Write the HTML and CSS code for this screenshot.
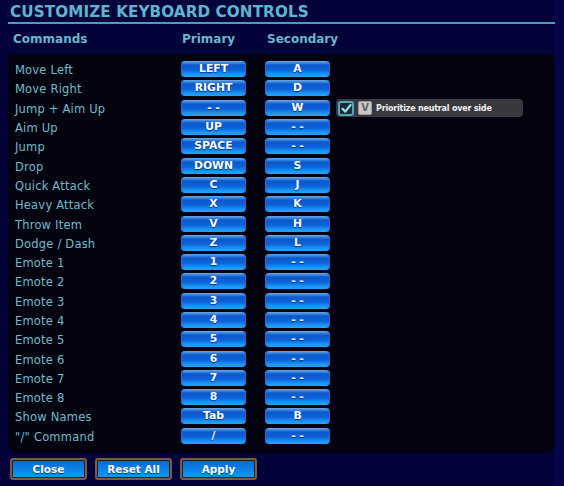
FILE: index.html
```html
<!DOCTYPE html>
<html>
<head>
<meta charset="utf-8">
<link rel="stylesheet" href="styles.css">
</head>
<body>
<div class="screen">
  <h1 class="title">CUSTOMIZE KEYBOARD CONTROLS</h1>
  <div class="heads">
    <span class="h-cmd">Commands</span>
    <span class="h-pri">Primary</span>
    <span class="h-sec">Secondary</span>
  </div>
  <div class="panel">
    <div class="row"><span class="label">Move Left</span><span class="key">LEFT</span><span class="key">A</span></div>
    <div class="row"><span class="label">Move Right</span><span class="key">RIGHT</span><span class="key">D</span></div>
    <div class="row"><span class="label">Jump + Aim Up</span><span class="key">- -</span><span class="key">W</span>
      <span class="opt"><span class="check"><svg width="11" height="11" viewBox="0 0 11 11"><path d="M1.5 5.8 L4.3 8.6 L9.6 2" fill="none" stroke="#8fe0f0" stroke-width="2.2" stroke-linecap="round" stroke-linejoin="round"/></svg></span><span class="vkey">V</span><span class="opt-text">Prioritize neutral over side</span></span>
    </div>
    <div class="row"><span class="label">Aim Up</span><span class="key">UP</span><span class="key">- -</span></div>
    <div class="row"><span class="label">Jump</span><span class="key">SPACE</span><span class="key">- -</span></div>
    <div class="row"><span class="label">Drop</span><span class="key">DOWN</span><span class="key">S</span></div>
    <div class="row"><span class="label">Quick Attack</span><span class="key">C</span><span class="key">J</span></div>
    <div class="row"><span class="label">Heavy Attack</span><span class="key">X</span><span class="key">K</span></div>
    <div class="row"><span class="label">Throw Item</span><span class="key">V</span><span class="key">H</span></div>
    <div class="row"><span class="label">Dodge / Dash</span><span class="key">Z</span><span class="key">L</span></div>
    <div class="row"><span class="label">Emote 1</span><span class="key">1</span><span class="key">- -</span></div>
    <div class="row"><span class="label">Emote 2</span><span class="key">2</span><span class="key">- -</span></div>
    <div class="row"><span class="label">Emote 3</span><span class="key">3</span><span class="key">- -</span></div>
    <div class="row"><span class="label">Emote 4</span><span class="key">4</span><span class="key">- -</span></div>
    <div class="row"><span class="label">Emote 5</span><span class="key">5</span><span class="key">- -</span></div>
    <div class="row"><span class="label">Emote 6</span><span class="key">6</span><span class="key">- -</span></div>
    <div class="row"><span class="label">Emote 7</span><span class="key">7</span><span class="key">- -</span></div>
    <div class="row"><span class="label">Emote 8</span><span class="key">8</span><span class="key">- -</span></div>
    <div class="row"><span class="label">Show Names</span><span class="key">Tab</span><span class="key">B</span></div>
    <div class="row"><span class="label">"/" Command</span><span class="key">/</span><span class="key">- -</span></div>
  </div>
  <div class="actions">
    <span class="btn">Close</span>
    <span class="btn">Reset All</span>
    <span class="btn">Apply</span>
  </div>
</div>
</body>
</html>
```
FILE: styles.css
```css
html, body {
  margin: 0;
  padding: 0;
  background: #03033a;
  width: 564px;
  height: 486px;
  overflow: hidden;
}
.screen {
  font-family: "DejaVu Sans", Verdana, sans-serif;
  background: linear-gradient(to right, #03033a 0, #03033a 555px, #05054a 555px);
  height: 486px;
  padding-top: 4px;
  box-sizing: border-box;
}
.title {
  margin: 0 9px 0 8px;
  padding: 0 0 1px 2px;
  font-size: 15.2px;
  line-height: 17px;
  font-weight: bold;
  color: #5cb6cf;
  letter-spacing: 0.1px;
  border-bottom: 2px solid #4c9cbc;
}
.heads {
  display: flex;
  height: 30px;
  align-items: center;
  font-weight: bold;
  font-size: 12px;
  color: #6ab6cb;
}
.h-cmd { margin-left: 13px; width: 169px; }
.h-pri { width: 85px; }
.h-sec { }
.panel {
  margin: 0 9px 0 8px;
  background: #03030f;
  border-radius: 8px;
  padding: 6px 7px 8px 7px;
  height: 399px;
  box-sizing: border-box;
}
.row {
  display: flex;
  align-items: center;
  height: 19.3px;
  position: relative;
}
.row .key { margin-bottom: 1px; }
.label {
  width: 166px;
  font-size: 11.5px;
  color: #6fbccd;
  letter-spacing: 0.2px;
  padding-top: 1px;
}
.key {
  width: 65px;
  height: 16px;
  margin-right: 19px;
  box-sizing: border-box;
  border-radius: 4px;
  background: linear-gradient(to bottom, #6aa8ea 0, #3c86de 2px, #0b58cc 4px, #0c62d8 9px, #1a92f4 13px, #24a4ff 16px);
  box-shadow: inset 1px 0 0 #2a6ac8, inset -1px 0 0 #2a6ac8;
  color: #fff;
  font-weight: bold;
  font-size: 10.8px;
  line-height: 16px;
  text-align: center;
  text-shadow: 0 1px 1px #033080;
}
.opt {
  margin-left: -13px;
  display: flex;
  align-items: center;
  height: 18px;
  width: 187px;
  background: #38383e;
  border-radius: 4px;
  box-sizing: border-box;
  padding-left: 2px;
}
.check {
  width: 16px;
  height: 15px;
  box-sizing: border-box;
  border: 2px solid #4fa8c0;
  border-radius: 3px;
  background: #1c2a34;
  display: flex;
  align-items: center;
  justify-content: center;
}
.vkey {
  margin-left: 4px;
  width: 14px;
  height: 14px;
  background: #c8c8c8;
  border: 1px solid #9a9a9a;
  border-radius: 2px;
  box-sizing: border-box;
  color: #666;
  font-weight: bold;
  font-size: 10px;
  line-height: 12px;
  text-align: center;
}
.opt-text {
  margin-left: 4px;
  color: #f2f2f2;
  font-weight: bold;
  font-size: 8px;
  letter-spacing: -0.2px;
}
.actions {
  display: flex;
  gap: 8px;
  margin: 5px 0 0 10px;
}
.btn {
  width: 77px;
  height: 22px;
  box-sizing: border-box;
  border: 2px solid #7a5a48;
  border-radius: 3px;
  box-shadow: inset 0 0 0 1px #2a1c18;
  background: linear-gradient(to bottom, #0a64d2 0, #0a7ee4 8px, #12a0f4 20px);
  color: #fff;
  font-weight: bold;
  font-size: 10.5px;
  line-height: 18px;
  text-align: center;
  text-shadow: 0 1px 1px #033080;
}
```
